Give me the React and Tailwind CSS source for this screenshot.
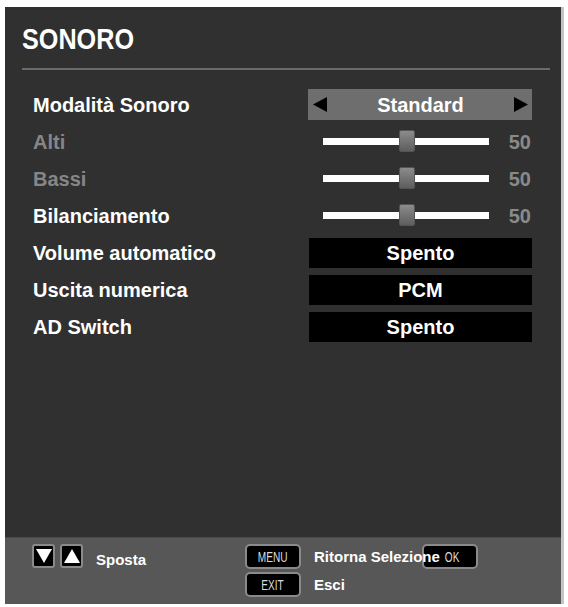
import React from "react";

const rows = [
  { label: "Modalità Sonoro", kind: "select", value: "Standard" },
  { label: "Alti", kind: "slider", value: 50, disabled: true },
  { label: "Bassi", kind: "slider", value: 50, disabled: true },
  { label: "Bilanciamento", kind: "slider", value: 50 },
  { label: "Volume automatico", kind: "box", value: "Spento" },
  { label: "Uscita numerica", kind: "box", value: "PCM" },
  { label: "AD Switch", kind: "box", value: "Spento" },
];

function Tri({ dir, w = 14, h = 15 }) {
  const pts = {
    left: `${w},0 ${w},${h} 0,${h / 2}`,
    right: `0,0 0,${h} ${w},${h / 2}`,
    up: `${w / 2},0 ${w},${h} 0,${h}`,
    down: `0,0 ${w},0 ${w / 2},${h}`,
  }[dir];
  return (
    <svg width={w} height={h} viewBox={`0 0 ${w} ${h}`}>
      <polygon points={pts} fill="currentColor" />
    </svg>
  );
}

function Control({ row }) {
  if (row.kind === "select") {
    return (
      <div className="w-[224px] h-[31px] bg-[#6e6e6e] flex items-center justify-between pl-[5px] pr-[4px] text-black">
        <Tri dir="left" />
        <span className="text-white text-[20px] font-bold leading-none">{row.value}</span>
        <Tri dir="right" />
      </div>
    );
  }
  if (row.kind === "slider") {
    return (
      <div className="w-[224px] flex items-center pl-[15px]">
        <div className="relative w-[166px] h-[7px] bg-white">
          <div className="absolute left-[76px] top-[-8px] w-[16px] h-[22px] rounded-[2px] bg-gradient-to-b from-[#8c8c8c] via-[#747474] to-[#5e5e5e] border border-[#555]" />
        </div>
        <span className="ml-auto pr-[1px] text-[20px] font-bold leading-none text-[#8a8a8a]">{row.value}</span>
      </div>
    );
  }
  return (
    <div className="w-[223px] ml-[1px] h-[30px] bg-black flex items-center justify-center text-white text-[20px] font-bold leading-none">
      {row.value}
    </div>
  );
}

function KeyBtn({ label, className = "" }) {
  return (
    <div className={"w-[56px] h-[25px] bg-black border-2 border-[#8a8a8a] rounded-[5px] flex items-center " + className}>
      <span className="inline-block text-[14px] leading-none text-[#dcdcdc] scale-x-[0.72]">{label}</span>
    </div>
  );
}

export default function App() {
  return (
    <div className="w-[568px] h-[607px] bg-white pt-[7px] pl-[5px] font-['Liberation_Sans',Arial,sans-serif]">
      <div className="w-[559px] h-[597px] bg-[#303030] border-r-[3px] border-[#c4c4c4] flex flex-col">
        <div className="mt-[17px] pl-[17px] text-[30px] leading-[30px] font-bold text-white">
          <span className="inline-block origin-left scale-x-[0.84]">SONORO</span>
        </div>
        <div className="mt-[14px] ml-[17px] mr-[11px] h-[2px] bg-[#6a6a6a]" />
        <div className="mt-[16px] flex flex-col">
          {rows.map((row) => (
            <div key={row.label} className="h-[37px] flex items-center pl-[28px] pr-[29px]">
              <span className={"flex-1 text-[20px] font-bold leading-none " + (row.disabled ? "text-[#868686]" : "text-white")}>
                {row.label}
              </span>
              <Control row={row} />
            </div>
          ))}
        </div>
        <div className="mt-auto h-[67px] bg-[#575757] border-t border-[#4a4a4a] flex pl-[27px] pt-[6px]">
          <div className="w-[213px] flex items-start">
            <div className="w-[23px] h-[24px] bg-black border-2 border-[#8a8a8a] rounded-[3px] flex items-center justify-center text-white">
              <Tri dir="down" w={16} h={14} />
            </div>
            <div className="ml-[5px] w-[23px] h-[24px] bg-black border-2 border-[#8a8a8a] rounded-[3px] flex items-center justify-center text-white">
              <Tri dir="up" w={16} h={14} />
            </div>
            <span className="ml-[13px] mt-[8px] text-[15px] font-bold text-white leading-none">Sposta</span>
          </div>
          <div className="flex flex-col gap-[3px]">
            <div className="flex items-center">
              <KeyBtn label="MENU" className="justify-center" />
              <span className="relative z-10 ml-[13px] text-[15px] font-bold text-white leading-none">Ritorna Selezione</span>
              <KeyBtn label="OK" className="ml-[-18px] pl-[18px]" />
            </div>
            <div className="flex items-center">
              <KeyBtn label="EXIT" className="justify-center" />
              <span className="ml-[13px] text-[15px] font-bold text-white leading-none">Esci</span>
            </div>
          </div>
        </div>
      </div>
    </div>
  );
}
